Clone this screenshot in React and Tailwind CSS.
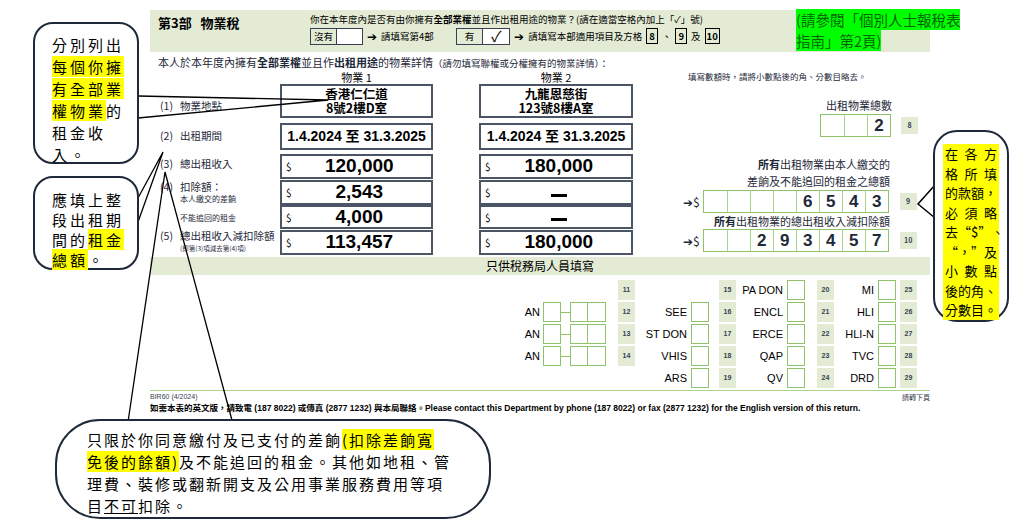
const cjk = { fontFamily: '"Noto Sans CJK TC", "Liberation Sans", sans-serif' };
const num = { fontFamily: '"Liberation Sans Narrow", "Liberation Sans", "Noto Sans CJK TC", sans-serif' };

function Tag({ n, className = "" }) {
  if (!n) return <div className={"w-[17px] " + className} />;
  return (
    <div className={"w-[17px] h-[17px] bg-[#e3ebd5] flex items-center justify-center text-[7px] font-bold text-gray-700 " + className}>
      {n}
    </div>
  );
}

function Cells({ values }) {
  return (
    <div className="flex border border-[#8fc26a]">
      {values.map((v, i) => (
        <div key={i} className="w-[23px] h-[21px] border-l border-[#a9d48a] first:border-l-0 flex items-center justify-center text-[17px] font-bold" style={num}>
          {v}
        </div>
      ))}
    </div>
  );
}

function AmountBox({ v }) {
  return (
    <div className="border-2 border-gray-600 flex items-center px-1 h-full">
      <span className="text-[10px]">$</span>
      <span className="flex-1 text-center text-[19px] font-bold" style={num}>{v}</span>
    </div>
  );
}

function Dash() {
  return <span className="inline-block w-[16px] h-[3px] bg-black align-middle" />;
}

function StaffRow({ an, b, c, d, t }) {
  return (
    <div className="flex items-center h-[20px]">
      <div className="w-[458px] flex items-center justify-end pr-[2px]">
        {an && (
          <>
            <span className="text-[11px] mr-[3px]">AN</span>
            <div className="w-[18px] h-[20px] border border-[#8fc26a]" />
            <div className="w-[9px] h-px bg-[#8fc26a]" />
            <div className="w-[18px] h-[20px] border border-[#8fc26a]" />
            <div className="w-[18px] h-[20px] border border-[#8fc26a] border-l-0" />
          </>
        )}
      </div>
      <Tag n={t[0]} className="ml-[10px] h-[20px]" />
      <div className="w-[74px] flex items-center justify-end">
        {b && <><span className="text-[11px] mr-[4px]">{b}</span><div className="w-[18px] h-[20px] border border-[#8fc26a]" /></>}
      </div>
      <Tag n={t[1]} className="ml-[10px] h-[20px]" />
      <div className="w-[69px] flex items-center justify-end">
        <span className="text-[11px] mr-[4px]">{c}</span><div className="w-[18px] h-[20px] border border-[#8fc26a]" />
      </div>
      <Tag n={t[2]} className="ml-[12px] h-[20px]" />
      <div className="w-[62px] flex items-center justify-end">
        <span className="text-[11px] mr-[4px]">{d}</span><div className="w-[18px] h-[20px] border border-[#8fc26a]" />
      </div>
      <Tag n={t[3]} className="ml-[4px] h-[20px]" />
    </div>
  );
}

function Hl({ children }) {
  return <span className="bg-[#ffff00]">{children}</span>;
}

export default function App() {
  return (
    <div className="relative w-[1024px] h-[528px] bg-white overflow-hidden text-black" style={cjk}>
      {/* form */}
      <div className="ml-[150px] w-[780px] pt-[10px] relative">
        <div className="h-[42px] bg-[#e3ebd5] flex">
          <div className="w-[160px] pl-[8px] pt-[3px] text-[13px] font-bold">第3部&nbsp;&nbsp;&nbsp;物業稅</div>
          <div className="pt-[2px]">
            <div className="text-[9.5px]">你在本年度內是否有由你擁有<b>全部業權</b>並且作出租用途的物業？(請在適當空格內加上「✓」號)</div>
            <div className="flex items-center text-[9.5px] mt-[1px] gap-[4px]">
              <div className="flex border border-gray-700 h-[17px]">
                <span className="px-[3px] border-r border-gray-700 flex items-center">沒有</span>
                <span className="w-[25px] bg-white" />
              </div>
              <span className="text-[12px]">➔</span>
              <span>請填寫第4部</span>
              <div className="flex border border-gray-700 h-[17px] ml-[18px]">
                <span className="px-[8px] border-r border-gray-700 flex items-center">有</span>
                <span className="w-[26px] bg-white flex items-center justify-center text-[15px]">✓</span>
              </div>
              <span className="text-[12px]">➔</span>
              <span>請填寫本部適用項目及方格</span>
              <span className="border border-black px-[2px] font-bold">8</span>、
              <span className="border border-black px-[2px] font-bold">9</span>及
              <span className="border border-black px-[1px] font-bold">10</span>
            </div>
          </div>
        </div>
        <div className="absolute left-[646px] top-[9px] text-[14.5px] leading-[21px] text-[#006600] whitespace-nowrap">
          <span className="bg-[#00ff00]">(請參閱「個別人士報稅表</span>
          <br />
          <span className="bg-[#00ff00]">指南」第2頁)</span>
        </div>

        <div className="text-[11px] text-gray-800 pl-[8px] mt-[3px] leading-[14px]">
          本人於本年度內擁有<b>全部業權</b>並且作<b>出租用途</b>的物業詳情<span className="text-[9.5px]">（請勿填寫聯權或分權擁有的物業詳情）：</span>
        </div>

        <div className="flex">
          {/* left table */}
          <div className="w-[483px]">
            <div className="flex h-[14px] text-[11px] leading-[14px]">
              <div className="w-[130px]" />
              <div className="w-[153px] text-center">物業 1</div>
              <div className="w-[46px]" />
              <div className="w-[154px] text-center">物業 2</div>
            </div>
            <div className="flex h-[34px]">
              <div className="w-[130px] pl-[10px] pt-[14px] text-[10.5px] text-gray-800">(1)&nbsp;&nbsp;&nbsp;物業地點</div>
              <div className="w-[153px] border-2 border-gray-600 text-center text-[12.5px] font-bold leading-[14px] pt-[1px]">香港仁仁道<br />8號2樓D室</div>
              <div className="w-[46px]" />
              <div className="w-[154px] border-2 border-gray-600 text-center text-[12.5px] font-bold leading-[14px] pt-[1px]">九龍恩慈街<br />123號8樓A室</div>
            </div>
            <div className="flex h-[27px] mt-[5px]">
              <div className="w-[130px] pl-[10px] pt-[5px] text-[10.5px] text-gray-800">(2)&nbsp;&nbsp;&nbsp;出租期間</div>
              <div className="w-[153px] border-2 border-gray-600 flex items-center justify-center text-[14px] font-bold" style={num}>1.4.2024 至 31.3.2025</div>
              <div className="w-[46px]" />
              <div className="w-[154px] border-2 border-gray-600 flex items-center justify-center text-[14px] font-bold" style={num}>1.4.2024 至 31.3.2025</div>
            </div>
            <div className="flex h-[25px] mt-[4px]">
              <div className="w-[130px] pl-[10px] pt-[2px] text-[10.5px] text-gray-800">(3)&nbsp;&nbsp;&nbsp;總出租收入</div>
              <div className="w-[153px]"><AmountBox v="120,000" /></div>
              <div className="w-[46px]" />
              <div className="w-[154px]"><AmountBox v="180,000" /></div>
            </div>
            <div className="flex h-[49px] mt-[1px]">
              <div className="w-[130px] pl-[10px] text-gray-800">
                <div className="text-[10.5px] leading-[13px]">(4)&nbsp;&nbsp;&nbsp;扣除額：</div>
                <div className="text-[8px] pl-[20px] leading-[11px]">本人繳交的差餉</div>
                <div className="text-[8px] pl-[20px] mt-[8px]">不能追回的租金</div>
              </div>
              <div className="w-[153px] flex flex-col">
                <div className="h-[25px]"><AmountBox v="2,543" /></div>
                <div className="h-[24px]"><AmountBox v="4,000" /></div>
              </div>
              <div className="w-[46px]" />
              <div className="w-[154px] flex flex-col">
                <div className="h-[25px] border-2 border-gray-600 flex items-center px-1"><span className="text-[10px]">$</span><span className="flex-1 text-center"><Dash /></span></div>
                <div className="h-[24px] border-2 border-gray-600 flex items-center px-1"><span className="text-[10px]">$</span><span className="flex-1 text-center"><Dash /></span></div>
              </div>
            </div>
            <div className="flex h-[25px] mt-[1px]">
              <div className="w-[130px] pl-[10px] text-gray-800 leading-[12px]">
                <div className="text-[10.5px]">(5)&nbsp;&nbsp;&nbsp;總出租收入減扣除額</div>
                <div className="text-[6.5px] pl-[20px]">(即第(3)項減去第(4)項)</div>
              </div>
              <div className="w-[153px]"><AmountBox v="113,457" /></div>
              <div className="w-[46px]" />
              <div className="w-[154px]"><AmountBox v="180,000" /></div>
            </div>
          </div>

          {/* right column */}
          <div className="w-[297px] text-gray-800">
            <div className="pl-[55px] text-[8.5px] h-[14px]">填寫數額時，請將小數點後的角、分數目略去。</div>
            <div className="text-right pr-[38px] text-[11px] mt-[14px] leading-[14px]">出租物業總數</div>
            <div className="flex items-center justify-end pr-[12px] mt-[2px] gap-[10px]">
              <Cells values={["", "", "2"]} />
              <Tag n="8" />
            </div>
            <div className="text-right pr-[40px] text-[11px] leading-[17px] mt-[19px]"><b>所有</b>出租物業由本人繳交的<br />差餉及不能追回的租金之總額</div>
            <div className="flex items-center pl-[50px] gap-[3px]">
              <span className="text-[12px]">➔$</span>
              <Cells values={["", "", "", "", "6", "5", "4", "3"]} />
              <Tag n="9" className="ml-[8px]" />
            </div>
            <div className="text-right pr-[40px] text-[11px] leading-[16px]"><b>所有</b>出租物業的總出租收入減扣除額</div>
            <div className="flex items-center pl-[50px] gap-[3px]">
              <span className="text-[12px]">➔$</span>
              <Cells values={["", "", "2", "9", "3", "4", "5", "7"]} />
              <Tag n="10" className="ml-[8px]" />
            </div>
          </div>
        </div>

        <div className="h-[18px] bg-[#e3ebd5] mt-[2px] text-center text-[12px] leading-[18px]">只供稅務局人員填寫</div>

        <div className="flex flex-col gap-[2px] mt-[5px]" style={num}>
          <StaffRow t={["11", "15", "20", "25"]} c="PA DON" d="MI" />
          <StaffRow an t={["12", "16", "21", "26"]} b="SEE" c="ENCL" d="HLI" />
          <StaffRow an t={["13", "17", "22", "27"]} b="ST DON" c="ERCE" d="HLI-N" />
          <StaffRow an t={["14", "18", "23", "28"]} b="VHIS" c="QAP" d="TVC" />
          <StaffRow t={["", "19", "24", "29"]} b="ARS" c="QV" d="DRD" />
        </div>

        <div className="border-t border-[#a9d48a] mt-[2px] flex justify-between text-[7px] text-gray-700 pt-[1px] leading-[10px]">
          <span style={num}>BIR60 (4/2024)</span>
          <span>請轉下頁</span>
        </div>
        <div className="text-[8.5px] font-bold whitespace-nowrap leading-[12px]" style={num}>
          如需本表的英文版，請致電 (187 8022) 或傳真 (2877 1232) 與本局聯絡。Please contact this Department by phone (187 8022) or fax (2877 1232) for the English version of this return.
        </div>
      </div>

      {/* tails */}
      <svg className="absolute inset-0 pointer-events-none" width="1024" height="528">
        <g fill="none" stroke="black" strokeWidth="1.3">
          <polyline points="138,96 328,100 138,118" />
          <polyline points="138,198 163,152 138,222" />
          <polyline points="128,422 165,172 233,424" />
        </g>
        <polygon points="935,185 918,204 935,218" fill="white" stroke="black" strokeWidth="1.5" />
      </svg>

      {/* bubbles */}
      <div className="absolute left-[33px] top-[22px] w-[106px] h-[142px] rounded-[20px] border-2 border-gray-800 bg-white pl-[17px] pt-[10px] text-[15px] leading-[22px] tracking-[3px]">
        分別列出<br /><Hl>每個你擁</Hl><br /><Hl>有全部業</Hl><br /><Hl>權物業</Hl>的<br />租金收<br />入。
      </div>
      <div className="absolute left-[33px] top-[176px] w-[106px] h-[94px] rounded-[20px] border-2 border-gray-800 bg-white pl-[17px] pt-[12px] text-[15px] leading-[20px] tracking-[3px]">
        應填上整<br />段出租期<br />間的<Hl>租金</Hl><br /><Hl>總額</Hl>。
      </div>
      <div className="absolute left-[933px] top-[130px] w-[76px] h-[192px] rounded-[24px] border-2 border-gray-800 bg-white px-[8px] py-[12px]">
        <div className="bg-[#ffff00] text-[13px] leading-[19.5px] px-[2px]">
          {["在各方", "格所填", "的款額，", "必須略", "去“$”、", "“，”及", "小數點", "後的角、", "分數目。"].map((l, i) => (
            <div key={i} className="flex justify-between">{[...l].map((c, j) => <span key={j}>{c}</span>)}</div>
          ))}
        </div>
      </div>
      <div className="absolute left-[55px] top-[419px] w-[436px] h-[100px] rounded-[45px] border-2 border-gray-800 bg-white pl-[30px] pt-[8px] text-[15px] leading-[22px] tracking-[2px]">
        只限於你同意繳付及已支付的差餉<Hl>(扣除差餉寬</Hl><br />
        <Hl>免後的餘額)</Hl>及不能追回的租金。其他如地租、管<br />
        理費、裝修或翻新開支及公用事業服務費用等項<br />
        目<span className="underline">不可</span>扣除。
      </div>
    </div>
  );
}
